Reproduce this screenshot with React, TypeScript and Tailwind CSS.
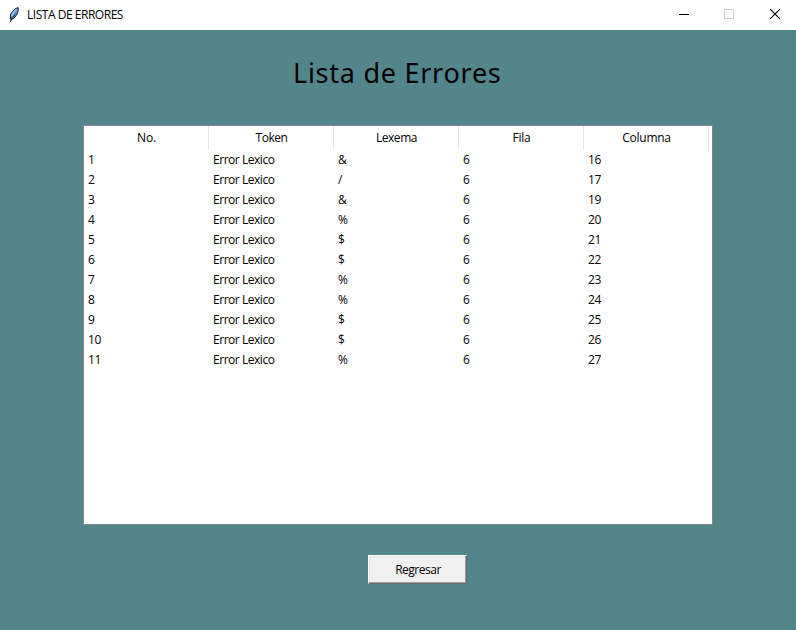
const columns = [
  { label: "No.", tracking: "tracking-[-0.2px]" },
  { label: "Token", tracking: "tracking-[-0.45px]" },
  { label: "Lexema", tracking: "tracking-[-0.45px]" },
  { label: "Fila", tracking: "tracking-[-0.2px]" },
  { label: "Columna", tracking: "tracking-[-0.25px]" },
];

const rows = [
  ["1", "Error Lexico", "&", "6", "16"],
  ["2", "Error Lexico", "/", "6", "17"],
  ["3", "Error Lexico", "&", "6", "19"],
  ["4", "Error Lexico", "%", "6", "20"],
  ["5", "Error Lexico", "$", "6", "21"],
  ["6", "Error Lexico", "$", "6", "22"],
  ["7", "Error Lexico", "%", "6", "23"],
  ["8", "Error Lexico", "%", "6", "24"],
  ["9", "Error Lexico", "$", "6", "25"],
  ["10", "Error Lexico", "$", "6", "26"],
  ["11", "Error Lexico", "%", "6", "27"],
];

function FeatherIcon() {
  return (
    <svg width="12" height="16" viewBox="0 0 12 16" className="shrink-0">
      <path d="M10.2 0.7C7 1.2 3.8 4.2 2.5 8.2L2.3 12.2L4.8 12C8.2 9.6 10.8 5 10.2 0.7Z" fill="#5c96d6" stroke="#15181d" strokeWidth="1" />
      <path d="M8.8 2.2C6.6 3.6 4.7 6.2 3.8 9.2" stroke="#8fc4f5" strokeWidth="1.4" fill="none" />
      <path d="M7 7.5C5.6 9.5 3.6 11.8 2.1 15.3" stroke="#10131a" strokeWidth="1" fill="none" />
    </svg>
  );
}

function TitleBar() {
  return (
    <header className="flex h-[30px] items-center bg-white pl-2">
      <FeatherIcon />
      <span className="ml-[7px] text-[12px] leading-4 tracking-[-0.47px]">LISTA DE ERRORES</span>
      <div className="ml-auto flex h-full">
        <button aria-label="Minimizar" className="flex w-[45px] items-center justify-center">
          <svg width="10" height="10" shapeRendering="crispEdges"><path d="M0 4.5H10" stroke="#000" /></svg>
        </button>
        <button aria-label="Maximizar" disabled className="flex w-[46px] items-center justify-center pb-0.5">
          <svg width="10" height="10" shapeRendering="crispEdges"><rect x="0.5" y="0.5" width="9" height="9" fill="none" stroke="#ccc" /></svg>
        </button>
        <button aria-label="Cerrar" className="flex w-[44px] items-center justify-center pb-0.5 pl-0.5">
          <svg width="10" height="10"><path d="M0 0L10 10M10 0L0 10" stroke="#000" strokeWidth="1.1" /></svg>
        </button>
      </div>
    </header>
  );
}

export default function App() {
  return (
    <div className="flex h-[630px] w-[796px] flex-col overflow-hidden bg-[#53868b] font-['Segoe_UI','Open_Sans',sans-serif] text-[12px] text-black">
      <TitleBar />
      <main className="flex flex-1 flex-col">
        <h1 className="mt-[23px] h-10 pl-[293px] font-['Comic_Sans_MS','Noto_Sans',sans-serif] text-[27px] leading-10 tracking-[0.74px] whitespace-nowrap">
          Lista de Errores
        </h1>
        <section className="mt-8 ml-[83px] h-[400px] w-[630px] border border-[#828790] bg-white">
          <div className="flex h-6">
            {columns.map((c) => (
              <div key={c.label} className={`w-[125px] border-r border-[#e5e5e5] pl-px text-center leading-6 ${c.tracking}`}>
                {c.label}
              </div>
            ))}
          </div>
          {rows.map((row) => (
            <div key={row[0]} className="flex h-5 leading-5">
              {row.map((cell, i) => (
                <div key={i} className="w-[125px] pl-1 tracking-[-0.46px]">{cell}</div>
              ))}
            </div>
          ))}
        </section>
        <button className="mt-[30px] ml-[368px] flex h-[29px] w-[99px] items-center justify-center border border-t-white border-r-[#696969] border-b-[#696969] border-l-white bg-[#f0f0f0] pl-px tracking-[-0.5px] shadow-[inset_-1px_-1px_#a0a0a0,inset_1px_1px_#e3e3e3]">
          Regresar
        </button>
      </main>
    </div>
  );
}
